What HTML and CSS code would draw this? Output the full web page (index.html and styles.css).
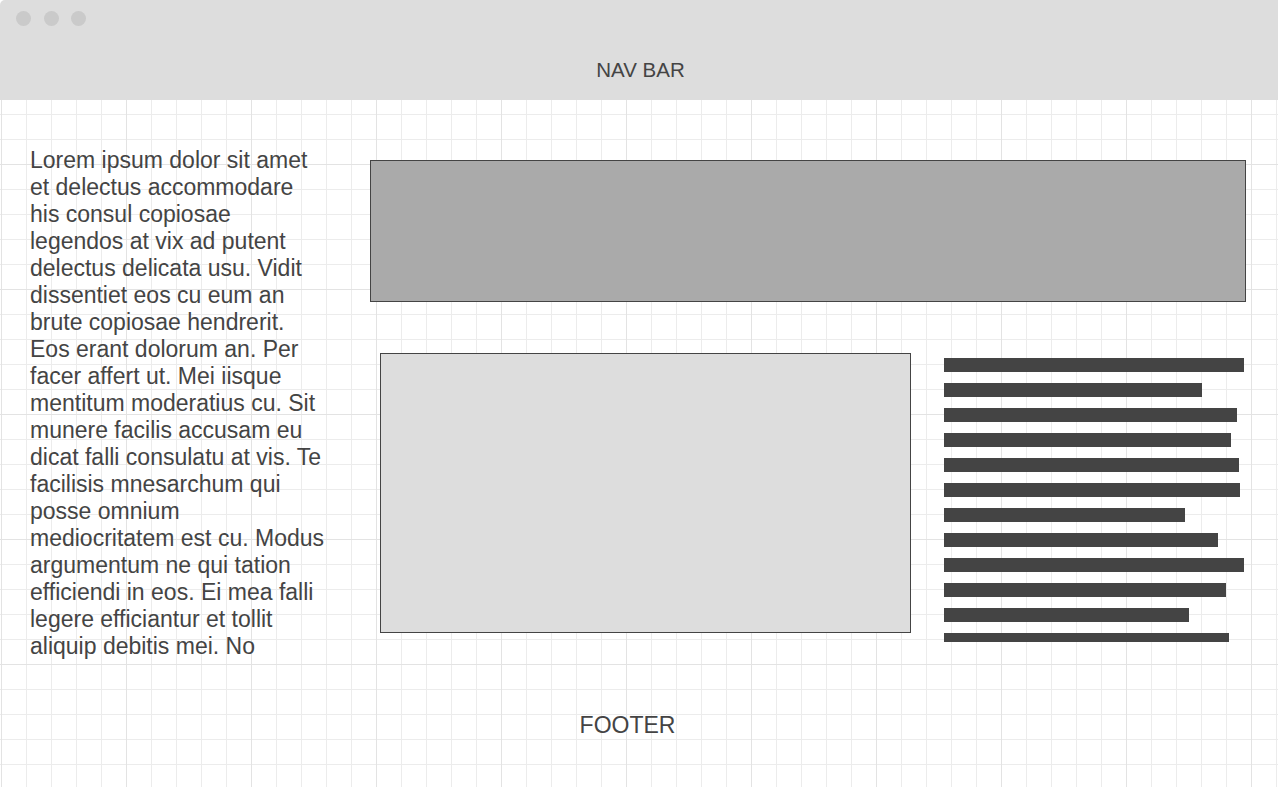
FILE: index.html
```html
<!DOCTYPE html>
<html lang="en">
<head>
	<meta charset="utf-8">
	<title>wireframe</title>
	<link rel="stylesheet" href="styles.css">
</head>
<body>
<div id="nav">
	<div class="dots">
		<span class="dot"></span>
		<span class="dot"></span>
		<span class="dot"></span>
	</div>
	<div class="nav-title">NAV BAR</div>
</div>

<div id="page">
	<div class="main">
		<div class="side-text">
			Lorem ipsum dolor sit amet et delectus accommodare his consul copiosae legendos at vix ad putent delectus delicata usu. Vidit dissentiet eos cu eum an brute copiosae hendrerit. Eos erant dolorum an. Per facer affert ut. Mei iisque mentitum moderatius cu. Sit munere facilis accusam eu dicat falli consulatu at vis. Te facilisis mnesarchum qui posse omnium mediocritatem est cu. Modus argumentum ne qui tation efficiendi in eos. Ei mea falli legere efficiantur et tollit aliquip debitis mei. No
		</div>
		<div class="content">
			<div class="hero"></div>
			<div class="row">
				<div class="picture"></div>
				<div class="lines">
					<div class="line" style="width: 300px"></div>
					<div class="line" style="width: 258px"></div>
					<div class="line" style="width: 293px"></div>
					<div class="line" style="width: 287px"></div>
					<div class="line" style="width: 295px"></div>
					<div class="line" style="width: 296px"></div>
					<div class="line" style="width: 241px"></div>
					<div class="line" style="width: 274px"></div>
					<div class="line" style="width: 300px"></div>
					<div class="line" style="width: 282px"></div>
					<div class="line" style="width: 245px"></div>
					<div class="line" style="width: 285px"></div>
				</div>
			</div>
		</div>
	</div>
	<div class="footer">FOOTER</div>
</div>
</body>
</html>
```

FILE: styles.css
```css
body {
    margin: 0;
    font-family: "Liberation Sans", Arial, sans-serif;
    color: #444;
    background: #fff;
}

#nav {
    height: 100px;
    background-color: #ddd;
    border-top-left-radius: 5px;
    display: flex;
    flex-direction: column;
}

.dots {
    display: flex;
    gap: 12.5px;
    padding: 11px 0 0 16px;
}

.dot {
    width: 15px;
    height: 15px;
    border-radius: 50%;
    background-color: #cacaca;
}

.nav-title {
    margin-top: 32px;
    padding-left: 3px;
    text-align: center;
    font-size: 20.5px;
    line-height: 24px;
}

#page {
    height: 687px;
    display: flex;
    flex-direction: column;
    background-image:
        linear-gradient(to right, #e3e3e3 1px, transparent 1px),
        linear-gradient(to bottom, #e3e3e3 1px, transparent 1px),
        linear-gradient(to right, #ececec 1px, transparent 1px),
        linear-gradient(to bottom, #ececec 1px, transparent 1px);
    background-size: 125px 125px, 125px 125px, 25px 25px, 25px 25px;
    background-position: 1px 64px;
}

.main {
    height: 564px;
    display: flex;
}

.side-text {
    width: 298px;
    height: 513px;
    margin: 47px 0 0 30px;
    font-size: 23px;
    line-height: 27px;
}

.content {
    width: 876px;
    margin-left: 42px;
    padding-top: 60px;
    display: flex;
    flex-direction: column;
}

.hero {
    height: 142px;
    box-sizing: border-box;
    border: 1px solid #444;
    background-color: #aaa;
}

.row {
    display: flex;
    margin-top: 51px;
    padding-left: 10px;
}

.picture {
    width: 531px;
    height: 280px;
    box-sizing: border-box;
    border: 1px solid #444;
    background-color: #ddd;
}

.lines {
    width: 300px;
    height: 284px;
    margin: 5px 0 0 33px;
    overflow: hidden;
    display: flex;
    flex-direction: column;
    gap: 11px;
}

.line {
    flex: none;
    height: 14px;
    background-color: #444;
}

.footer {
    flex: 1;
    display: flex;
    justify-content: center;
    align-items: center;
    padding-right: 23px;
    font-size: 23px;
}
```
